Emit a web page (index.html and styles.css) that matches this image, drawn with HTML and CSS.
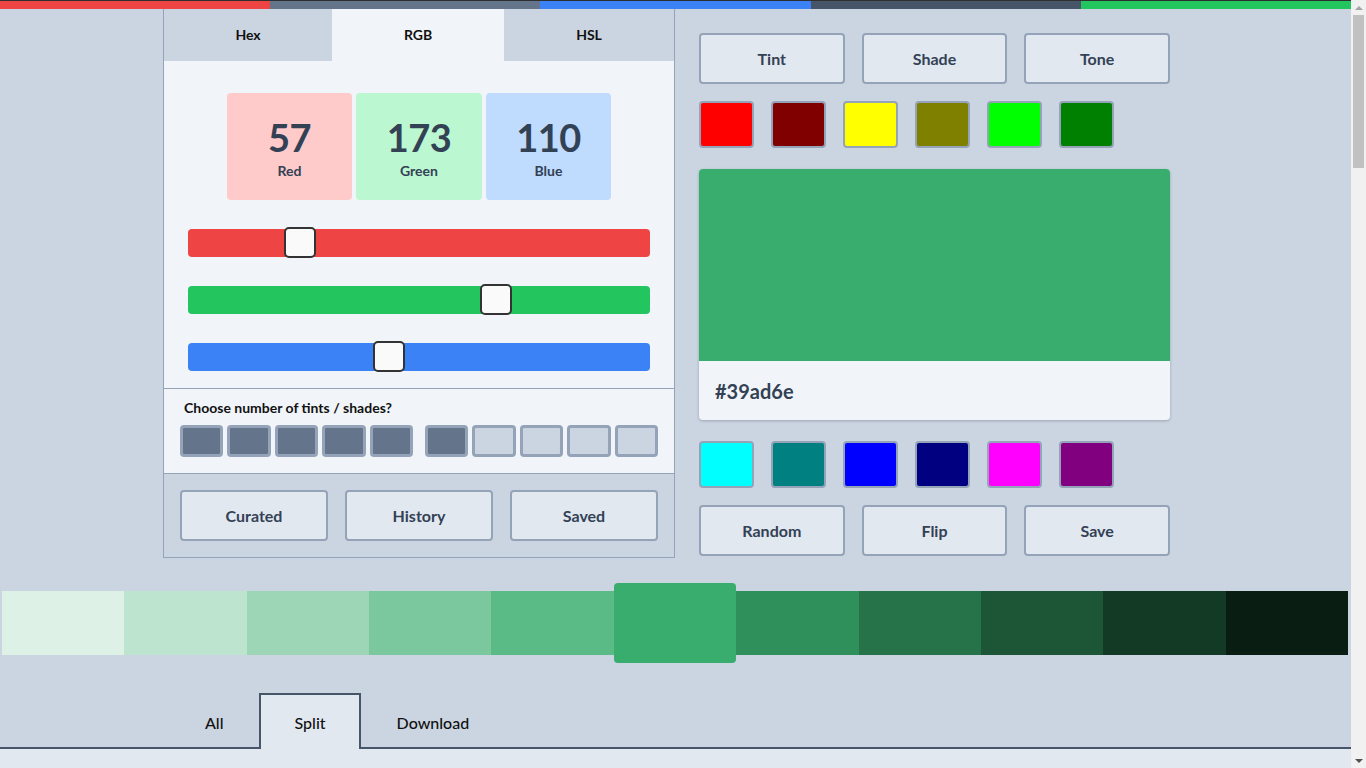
FILE: index.html
```html
<!DOCTYPE html>
<html lang="en">
<head>
<meta charset="utf-8">
<title>Tints &amp; Shades</title>
<link rel="stylesheet" href="styles.css">
</head>
<body>
<div class="topbar">
  <span class="seg seg-red"></span><span class="seg seg-slate"></span><span class="seg seg-blue"></span><span class="seg seg-dark"></span><span class="seg seg-green"></span>
</div>

<main class="workspace">
  <section class="panel">
    <nav class="mode-tabs">
      <button class="mode-tab">Hex</button>
      <button class="mode-tab active">RGB</button>
      <button class="mode-tab">HSL</button>
    </nav>
    <div class="rgb-body">
      <div class="channels">
        <div class="channel channel-red"><span class="channel-value">57</span><span class="channel-label">Red</span></div>
        <div class="channel channel-green"><span class="channel-value">173</span><span class="channel-label">Green</span></div>
        <div class="channel channel-blue"><span class="channel-value">110</span><span class="channel-label">Blue</span></div>
      </div>
      <div class="sliders">
        <div class="slider slider-red"><span class="thumb" style="--v:57"></span></div>
        <div class="slider slider-green"><span class="thumb" style="--v:173"></span></div>
        <div class="slider slider-blue"><span class="thumb" style="--v:110"></span></div>
      </div>
    </div>
    <div class="count">
      <p class="count-title">Choose number of tints / shades?</p>
      <div class="count-boxes">
        <div class="count-group">
          <span class="count-box on"></span><span class="count-box on"></span><span class="count-box on"></span><span class="count-box on"></span><span class="count-box on"></span>
        </div>
        <div class="count-group">
          <span class="count-box on"></span><span class="count-box"></span><span class="count-box"></span><span class="count-box"></span><span class="count-box"></span>
        </div>
      </div>
    </div>
    <div class="lists">
      <button class="btn">Curated</button>
      <button class="btn">History</button>
      <button class="btn">Saved</button>
    </div>
  </section>

  <section class="side">
    <div class="btn-row">
      <button class="btn">Tint</button>
      <button class="btn">Shade</button>
      <button class="btn">Tone</button>
    </div>
    <div class="swatch-row">
      <span class="swatch c-red"></span><span class="swatch c-maroon"></span><span class="swatch c-yellow"></span><span class="swatch c-olive"></span><span class="swatch c-lime"></span><span class="swatch c-green"></span>
    </div>
    <div class="preview">
      <div class="preview-color"></div>
      <div class="preview-hex">#39ad6e</div>
    </div>
    <div class="swatch-row">
      <span class="swatch c-cyan"></span><span class="swatch c-teal"></span><span class="swatch c-blue"></span><span class="swatch c-navy"></span><span class="swatch c-magenta"></span><span class="swatch c-purple"></span>
    </div>
    <div class="btn-row">
      <button class="btn">Random</button>
      <button class="btn">Flip</button>
      <button class="btn">Save</button>
    </div>
  </section>
</main>

<div class="strip">
  <span class="strip-swatch" style="background:#def1e7"></span>
  <span class="strip-swatch" style="background:#bde4cf"></span>
  <span class="strip-swatch" style="background:#9cd6b6"></span>
  <span class="strip-swatch" style="background:#7bc89e"></span>
  <span class="strip-swatch" style="background:#5abb86"></span>
  <span class="strip-swatch current" style="background:#39ad6e"></span>
  <span class="strip-swatch" style="background:#30905c"></span>
  <span class="strip-swatch" style="background:#267349"></span>
  <span class="strip-swatch" style="background:#1c5637"></span>
  <span class="strip-swatch" style="background:#133a25"></span>
  <span class="strip-swatch" style="background:#0a1d12"></span>
</div>

<nav class="view-tabs">
  <button class="view-tab">All</button>
  <button class="view-tab active">Split</button>
  <button class="view-tab">Download</button>
</nav>
<div class="view-content"></div>

<div class="scrollbar" aria-hidden="true">
  <span class="sb-arrow sb-up"></span>
  <span class="sb-thumb"></span>
  <span class="sb-arrow sb-down"></span>
</div>
</body>
</html>
```

FILE: styles.css
```css
* { box-sizing: border-box; }

body {
  margin: 0 15px 0 0;
  background: #cbd5e1;
  font-family: Lato, "Liberation Sans", sans-serif;
  color: #334155;
}

button {
  font-family: inherit;
  cursor: pointer;
}

/* top colour bar */
.topbar {
  display: flex;
  height: 9px;
  border-top: 1px solid #2f2f2f;
}
.seg { flex: 1; }
.seg-red { background: #ef4444; }
.seg-slate { background: #64748b; }
.seg-blue { background: #3b82f6; }
.seg-dark { background: #475569; }
.seg-green { background: #22c55e; }

/* two-column workspace */
.workspace {
  display: grid;
  grid-template-columns: 512px 471px;
  column-gap: 24px;
  padding-left: 163px;
  align-items: start;
}

/* left panel */
.panel {
  border: 1px solid #94a3b8;
  border-top: 0;
  background: #f1f5f9;
}

.mode-tabs {
  display: grid;
  grid-template-columns: 168px 172px 1fr;
  height: 52px;
  background: #cbd5e1;
}
.mode-tab {
  border: 0;
  padding: 0 0 2px;
  background: #cbd5e1;
  font-size: 14px;
  font-weight: 700;
  color: #111;
}
.mode-tab.active { background: #f1f5f9; }

.rgb-body { padding: 32px 24px 17px; }

.channels {
  display: flex;
  justify-content: center;
  gap: 4px;
}
.channel {
  width: 125px;
  height: 107px;
  padding-top: 4px;
  border-radius: 4px;
  display: flex;
  flex-direction: column;
  align-items: center;
  justify-content: center;
  gap: 6px;
  color: #334155;
}
.channel-green { width: 126px; }
.channel-red { background: #fecaca; }
.channel-green { background: #bbf7d0; }
.channel-blue { background: #bfdbfe; }
.channel-value {
  font-size: 38px;
  font-weight: 700;
  line-height: 1;
  letter-spacing: -0.5px;
}
.channel-label {
  font-size: 14px;
  font-weight: 700;
  line-height: 17px;
}

.sliders {
  margin-top: 29px;
  display: flex;
  flex-direction: column;
  gap: 29px;
}
.slider {
  position: relative;
  height: 28px;
  border-radius: 4px;
}
.slider-red { background: #ef4444; }
.slider-green { background: #22c55e; }
.slider-blue { background: #3b82f6; }
.thumb {
  position: absolute;
  top: -2px;
  left: calc(var(--v) / 255 * (100% - 32px));
  width: 32px;
  height: 31px;
  border: 2px solid #333;
  border-radius: 5px;
  background: #fafafa;
}

.count {
  border-top: 1px solid #94a3b8;
  padding: 10px 16px 16px;
}
.count-title {
  margin: 0 0 9px;
  padding-left: 4px;
  font-size: 14px;
  font-weight: 700;
  line-height: 17px;
  color: #111;
}
.count-boxes {
  display: grid;
  grid-template-columns: 1fr 1fr;
  gap: 12px;
}
.count-group {
  display: grid;
  grid-template-columns: repeat(5, 1fr);
  gap: 4px;
}
.count-box {
  height: 32px;
  border: 3px solid #94a3b8;
  border-radius: 4px;
  background: #cbd5e1;
}
.count-box.on { background: #64748b; }

.lists {
  border-top: 1px solid #94a3b8;
  background: #cbd5e1;
  padding: 16px;
  display: grid;
  grid-template-columns: repeat(3, 1fr);
  gap: 17px;
}

.btn {
  height: 51px;
  border: 2px solid #94a3b8;
  border-radius: 4px;
  background: #e2e8f0;
  font-size: 16px;
  font-weight: 700;
  color: #334155;
}

/* right column */
.side {
  padding-top: 24px;
  display: flex;
  flex-direction: column;
  gap: 17px;
}
.btn-row {
  display: grid;
  grid-template-columns: repeat(3, 1fr);
  gap: 17px;
}
.swatch-row {
  display: flex;
  gap: 17px;
}
.swatch {
  width: 55px;
  height: 47px;
  border: 2px solid #94a3b8;
  border-radius: 4px;
}
.c-red { background: #ff0000; }
.c-maroon { background: #800000; }
.c-yellow { background: #ffff00; }
.c-olive { background: #808000; }
.c-lime { background: #00ff00; }
.c-green { background: #008000; }
.c-cyan { background: #00ffff; }
.c-teal { background: #008080; }
.c-blue { background: #0000ff; }
.c-navy { background: #000080; }
.c-magenta { background: #ff00ff; }
.c-purple { background: #800080; }

.preview {
  margin: 4px 0;
  border-radius: 4px;
  overflow: hidden;
  background: #f1f5f9;
  box-shadow: 0 1px 3px rgba(15, 23, 42, 0.25);
}
.preview-color {
  height: 192px;
  background: #39ad6e;
}
.preview-hex {
  height: 59px;
  display: flex;
  align-items: center;
  padding-left: 16px;
  font-size: 20px;
  font-weight: 700;
  color: #334155;
}

/* tint / shade strip */
.strip {
  display: flex;
  align-items: center;
  height: 80px;
  margin-top: 25px;
  padding: 0 3px 0 2px;
}
.strip-swatch {
  flex: 1;
  height: 64px;
}
.strip-swatch.current {
  height: 80px;
  border-radius: 4px;
}

/* bottom view tabs */
.view-tabs {
  display: flex;
  margin-top: 30px;
  padding-left: 169px;
  border-bottom: 2px solid #475569;
}
.view-tab {
  height: 56px;
  margin-bottom: -2px;
  padding: 0 33px 0 34px;
  border: 2px solid transparent;
  border-bottom: 0;
  background: transparent;
  font-size: 16px;
  font-weight: 500;
  color: #111;
}
.view-tab.active {
  border-color: #475569;
  background: #e2e8f0;
}

.view-content {
  background: #e2e8f0;
  height: 2951px;
}

/* classic browser scrollbar, drawn over the right edge */
.scrollbar {
  position: fixed;
  top: 0;
  right: 0;
  width: 15px;
  height: 100vh;
  background: #f1f1f1;
  display: flex;
  flex-direction: column;
  align-items: center;
}
.sb-arrow {
  width: 15px;
  height: 15px;
  display: flex;
  align-items: center;
  justify-content: center;
}
.sb-arrow::before {
  content: "";
  border-left: 4px solid transparent;
  border-right: 4px solid transparent;
}
.sb-up::before { border-bottom: 4px solid #a3a3a3; }
.sb-down { margin-top: auto; }
.sb-down::before { border-top: 4px solid #505050; }
.sb-thumb {
  width: 11px;
  height: 153px;
  background: #c1c1c1;
}
```
